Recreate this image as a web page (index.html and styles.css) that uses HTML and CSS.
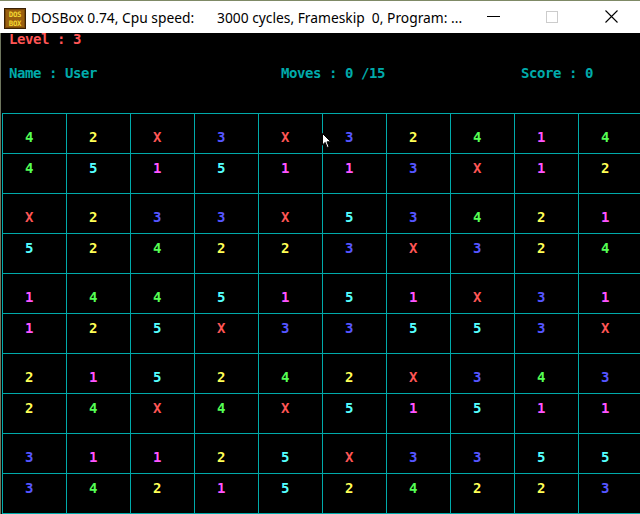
FILE: index.html
```html
<!DOCTYPE html>
<html>
<head>
<meta charset="utf-8">
<title>DOSBox</title>
<link rel="stylesheet" href="styles.css">
</head>
<body>
<div class="desk"></div>
<div class="titlebar">
  <svg class="appicon" width="22" height="21" viewBox="0 0 22 21">
    <rect x="0.5" y="0.5" width="21" height="20" fill="#7a4a08" stroke="#3a2004"/>
    <rect x="2" y="2" width="18" height="17" fill="#9a6010"/>
    <text x="11" y="9.2" class="ico-t">DOS</text>
    <text x="11" y="17.6" class="ico-t">BOX</text>
  </svg>
  <div class="ttl"><span class="t1">DOSBox 0.74, Cpu speed:</span><span class="t2">3000 cycles, Frameskip  0, Program: ...</span></div>
  <div class="wbtns">
    <svg class="wb" width="14" height="14" viewBox="0 0 14 14"><line x1="0" y1="6.5" x2="13" y2="6.5" stroke="#000" stroke-width="1"/></svg>
    <svg class="wb wb-max" width="13" height="13" viewBox="0 0 13 13"><rect x="0.5" y="0.5" width="11" height="11" fill="none" stroke="#cccccc"/></svg>
    <svg class="wb wb-close" width="14" height="14" viewBox="0 0 14 14"><path d="M0.5 0.5 L12.5 12.5 M12.5 0.5 L0.5 12.5" stroke="#000" stroke-width="1.1"/></svg>
  </div>
</div>
<div class="screen">
  <div class="head">
    <div class="level">Level : 3</div>
    <div class="stats"><span class="st st-name">Name : User</span><span class="st st-moves">Moves : 0 /15</span><span class="st">Score : 0</span></div>
  </div>
  <div class="board">
    <div class="row"><div class="cell v4">4</div><div class="cell v2">2</div><div class="cell vx">X</div><div class="cell v3">3</div><div class="cell vx">X</div><div class="cell v3">3</div><div class="cell v2">2</div><div class="cell v4">4</div><div class="cell v1">1</div><div class="cell v4">4</div></div>
    <div class="row"><div class="cell v4">4</div><div class="cell v5">5</div><div class="cell v1">1</div><div class="cell v5">5</div><div class="cell v1">1</div><div class="cell v1">1</div><div class="cell v3">3</div><div class="cell vx">X</div><div class="cell v1">1</div><div class="cell v2">2</div></div>
    <div class="row"><div class="cell vx">X</div><div class="cell v2">2</div><div class="cell v3">3</div><div class="cell v3">3</div><div class="cell vx">X</div><div class="cell v5">5</div><div class="cell v3">3</div><div class="cell v4">4</div><div class="cell v2">2</div><div class="cell v1">1</div></div>
    <div class="row"><div class="cell v5">5</div><div class="cell v2">2</div><div class="cell v4">4</div><div class="cell v2">2</div><div class="cell v2">2</div><div class="cell v3">3</div><div class="cell vx">X</div><div class="cell v3">3</div><div class="cell v2">2</div><div class="cell v4">4</div></div>
    <div class="row"><div class="cell v1">1</div><div class="cell v4">4</div><div class="cell v4">4</div><div class="cell v5">5</div><div class="cell v1">1</div><div class="cell v5">5</div><div class="cell v1">1</div><div class="cell vx">X</div><div class="cell v3">3</div><div class="cell v1">1</div></div>
    <div class="row"><div class="cell v1">1</div><div class="cell v2">2</div><div class="cell v5">5</div><div class="cell vx">X</div><div class="cell v3">3</div><div class="cell v3">3</div><div class="cell v5">5</div><div class="cell v5">5</div><div class="cell v3">3</div><div class="cell vx">X</div></div>
    <div class="row"><div class="cell v2">2</div><div class="cell v1">1</div><div class="cell v5">5</div><div class="cell v2">2</div><div class="cell v4">4</div><div class="cell v2">2</div><div class="cell vx">X</div><div class="cell v3">3</div><div class="cell v4">4</div><div class="cell v3">3</div></div>
    <div class="row"><div class="cell v2">2</div><div class="cell v4">4</div><div class="cell vx">X</div><div class="cell v4">4</div><div class="cell vx">X</div><div class="cell v5">5</div><div class="cell v1">1</div><div class="cell v5">5</div><div class="cell v1">1</div><div class="cell v1">1</div></div>
    <div class="row"><div class="cell v3">3</div><div class="cell v1">1</div><div class="cell v1">1</div><div class="cell v2">2</div><div class="cell v5">5</div><div class="cell vx">X</div><div class="cell v3">3</div><div class="cell v3">3</div><div class="cell v5">5</div><div class="cell v5">5</div></div>
    <div class="row"><div class="cell v3">3</div><div class="cell v4">4</div><div class="cell v2">2</div><div class="cell v1">1</div><div class="cell v5">5</div><div class="cell v2">2</div><div class="cell v4">4</div><div class="cell v2">2</div><div class="cell v2">2</div><div class="cell v3">3</div></div>
  </div>
  <svg class="cursor" width="11" height="16" viewBox="0 0 11 16"><path d="M0.5 0.5 V12 L3.2 9.4 L5.2 14.5 L7 13.8 L5 8.8 H8.8 Z" fill="#fff" stroke="#000" stroke-width="1" stroke-linejoin="miter"/></svg>
</div>
</body>
</html>
```
FILE: styles.css
```css
html, body {
  margin: 0;
  padding: 0;
  background: #000;
  overflow: hidden;
  width: 640px;
  height: 514px;
}
.desk {
  height: 1px;
  background: #7f8a66;
}
.titlebar {
  height: 32px;
  background: #fff;
  display: flex;
  align-items: center;
  position: relative;
  font-family: "Noto Sans", "Open Sans", sans-serif;
  font-size: 13.8px;
  color: #000;
}
.appicon {
  margin-left: 4px;
  margin-top: 2px;
  flex: none;
}
.ico-t {
  font-family: "DejaVu Sans Mono", monospace;
  font-weight: bold;
  font-size: 7.4px;
  fill: #f2d630;
  text-anchor: middle;
  letter-spacing: -0.3px;
}
.ttl {
  margin-left: 5px;
  white-space: pre;
  display: flex;
  margin-top: 1px;
}
.t1 {
  width: 186px;
}
.wbtns {
  margin-left: auto;
  display: flex;
  align-items: center;
  margin-right: 21px;
}
.wb { display: block; }
.wb-max { margin-left: 45px; }
.wb-close { margin-left: 46px; }

.screen {
  position: relative;
  border-left: 1px solid #6e765e;
  height: 481px;
  background: #000;
}
.head {
  height: 80px;
  padding-left: 8px;
  font-family: "DejaVu Sans Mono", monospace;
  font-weight: bold;
  font-size: 14px;
  letter-spacing: -0.43px;
}
.level {
  color: #ff5555;
  line-height: 13px;
}
.stats {
  margin-top: 19px;
  line-height: 16px;
  color: #00aaaa;
  display: flex;
  white-space: pre;
}
.st-name { width: 272px; }
.st-moves { width: 240px; }

.board {
  margin-left: 1px;
  width: 641px;
  border-bottom: 1px solid #00aaaa;
  font-family: "DejaVu Sans Mono", monospace;
  font-weight: bold;
  font-size: 14px;
  line-height: 16px;
}
.row {
  display: flex;
  height: 40px;
}
.cell {
  box-sizing: border-box;
  flex: none;
  width: 64px;
  height: 40px;
  border-top: 1px solid #00aaaa;
  border-left: 1px solid #00aaaa;
  padding-left: 22px;
  padding-top: 6px;
}
.row:nth-child(odd) .cell { padding-top: 15px; }
.v1 { color: #ff55ff; }
.v2 { color: #ffff55; }
.v3 { color: #5555ff; }
.v4 { color: #55ff55; }
.v5 { color: #55ffff; }
.vx { color: #ff5555; }
.cursor {
  position: absolute;
  left: 321px;
  top: 100px;
}
```
